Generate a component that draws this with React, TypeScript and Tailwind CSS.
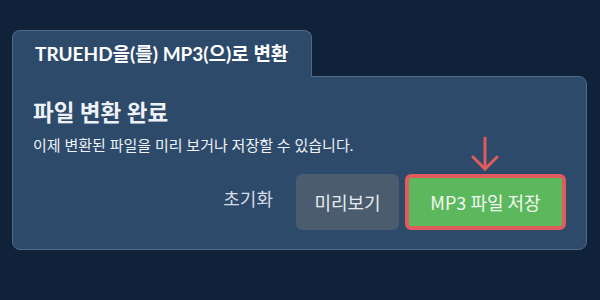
export default function App() {
  const font = { fontFamily: 'Lato, "Noto Sans CJK KR", sans-serif' };
  return (
    <div
      className="min-h-[300px] w-[600px] bg-[#10223a] pl-[12px] pt-[30px]"
      style={font}
    >
      <div className="w-[575px]">
        <div className="relative z-10 -mb-px flex h-[47px] w-[300px] items-center rounded-t-lg border border-b-0 border-[#4f6a8a] bg-[#2d4a6b] pl-[22px]">
          <span className="text-[19px] font-bold text-white">
            TRUEHD을(를) MP3(으)로 변환
          </span>
        </div>
        <div className="rounded-b-lg rounded-tr-lg border border-[#4f6a8a] bg-[#2d4a6b] px-[20px] pb-[19px] pt-[22px]">
          <h2 className="text-[22.5px] font-bold leading-[28px] text-[#eef2f6]">
            파일 변환 완료
          </h2>
          <p className="mt-[8px] text-[15px] leading-[20px] text-[#eef2f6]">
            이제 변환된 파일을 미리 보거나 저장할 수 있습니다.
          </p>
          <div className="mt-[19px] flex items-center justify-end font-['Noto_Sans_CJK_KR',sans-serif]">
            <button className="mr-[23px] -mt-[8px] text-[18px] text-[#d6dde5]">
              초기화
            </button>
            <button className="h-[56px] w-[103px] rounded-md bg-[#4b5c6f] text-[18px] text-[#e6ebf0]">
              미리보기
            </button>
            <div className="relative ml-[6px]">
              <svg
                className="absolute -top-[38px] left-[66px]"
                width="28"
                height="36"
                viewBox="0 0 28 36"
                fill="none"
                stroke="#e05c5c"
                strokeWidth="3"
                strokeLinecap="round"
                strokeLinejoin="round"
              >
                <path d="M14 2v31" />
                <path d="M2 21l12 12 12-12" />
              </svg>
              <button className="h-[56px] w-[161px] rounded-md border-4 border-[#e05c5c] bg-[#5cb85c] text-[18px] text-[#f2f8f2]">
                MP3 파일 저장
              </button>
            </div>
          </div>
        </div>
      </div>
    </div>
  );
}
